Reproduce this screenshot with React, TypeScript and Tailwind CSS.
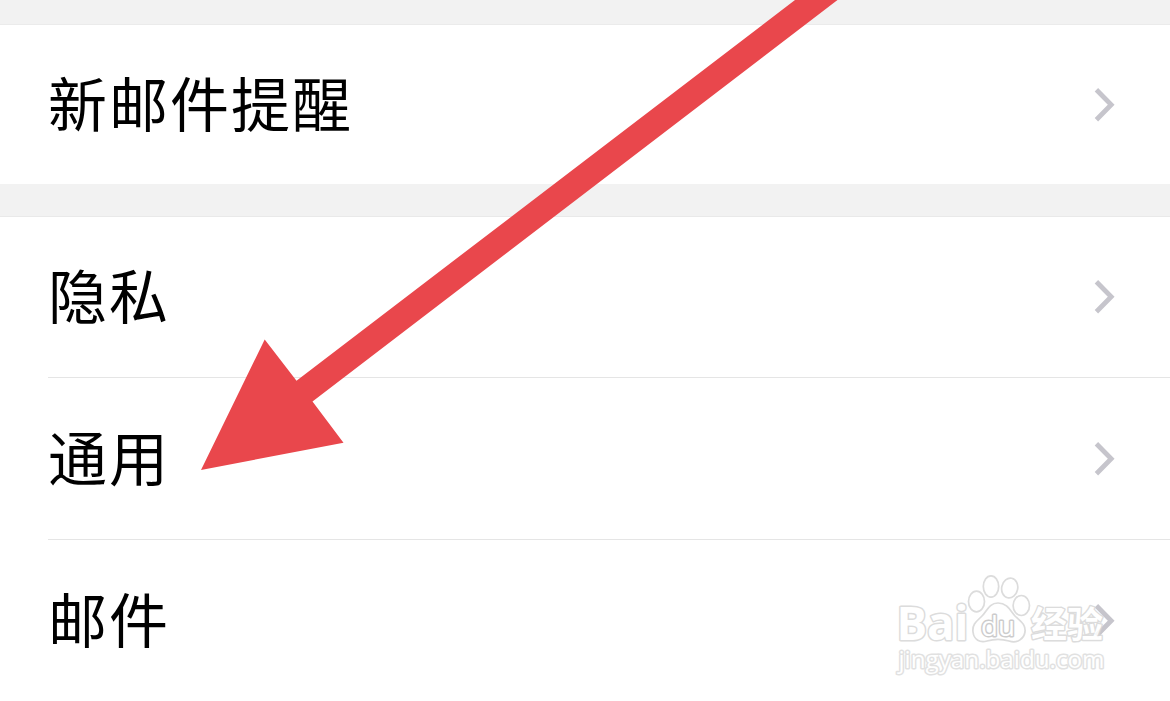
import React from 'react';

const Chevron = () => (
  <svg className="h-9 w-6 shrink-0" viewBox="0 0 24 36" fill="none">
    <path d="M3.4 2.8 L18.2 17.8 L3.4 32.8" stroke="#c6c5cc" strokeWidth="4.8" />
  </svg>
);

const Row = ({ label, divider }: { label: string; divider?: boolean }) => (
  <div className="pl-12">
    <div
      className={
        divider
          ? 'flex h-[162px] items-center justify-between border-t border-[#e5e5e5] pr-[53px]'
          : 'flex h-40 items-center justify-between pr-[53px]'
      }
    >
      <span className="pb-[7px] text-[59px] leading-none tracking-[2px] text-black">{label}</span>
      <Chevron />
    </div>
  </div>
);

const Arrow = () => (
  <svg className="pointer-events-none absolute inset-0 h-full w-full" viewBox="0 0 1170 701">
    <path d="M201 470 L264.7 339.5 L296.5 380.7 L795 0 L837.5 0 L312.5 401.5 L343.5 442.7 Z" fill="#e9474c" />
  </svg>
);

const Watermark = () => (
  <svg
    className="pointer-events-none absolute right-[40px] bottom-[11px] h-[130px] w-[250px] opacity-85"
    viewBox="0 0 250 130"
    fill="#fff"
    stroke="#d6d6d6"
    strokeWidth="1.7"
    strokeLinejoin="round"
  >
    <ellipse cx="96.5" cy="41.5" rx="8" ry="10.3" />
    <ellipse cx="111" cy="26.5" rx="7.7" ry="10.7" />
    <ellipse cx="129.7" cy="28" rx="8" ry="10" transform="rotate(12 129.7 28)" />
    <ellipse cx="141.3" cy="45.5" rx="8.2" ry="10" />
    <path d="M118 43 C109 43 107 51 102 56 C97 61 92 64 93 72 C94 80 100 83 107 81 C114 79 122 79 129 81 C138 84 144 78 145 72 C146 64 140 61 135 56 C130 50 127 43 118 43 Z" />
    <g fontFamily="'Open Sans', sans-serif" strokeWidth="3" paintOrder="stroke">
      <text x="16.5" y="79.5" fontSize="46" className="font-bold" textLength="72" lengthAdjust="spacingAndGlyphs">
        Bai
      </text>
      <text x="101" y="75.5" fontSize="28" className="font-normal" stroke="#c4c4c4" textLength="34" lengthAdjust="spacingAndGlyphs">
        du
      </text>
      <text x="18.5" y="107.5" fontSize="23.5" className="font-normal" stroke="#dcdcdc" textLength="206" lengthAdjust="spacingAndGlyphs">
        jingyan.baidu.com
      </text>
    </g>
    <text
      x="151"
      y="77.5"
      fontSize="36.5"
      strokeWidth="2.8"
      paintOrder="stroke"
      className="font-bold"
      fontFamily="'Noto Sans CJK SC', sans-serif"
      textLength="72"
      lengthAdjust="spacingAndGlyphs"
    >
      经验
    </text>
  </svg>
);

const App = () => {
  return (
    <div
      lang="zh-CN"
      className="relative h-[701px] w-[1170px] overflow-hidden bg-white font-['Noto_Sans_CJK_SC',sans-serif]"
    >
      <div className="h-[25px] border-b border-[#ebebeb] bg-[#f2f2f2]"></div>
      <div className="-mb-px">
        <Row label="新邮件提醒" />
      </div>
      <div className="relative h-[33px] border-b border-[#e9e9e9] bg-[#f2f2f2]"></div>
      <Row label="隐私" />
      <Row label="通用" divider />
      <Row label="邮件" divider />
      <Watermark />
      <Arrow />
    </div>
  );
};

export default App;
